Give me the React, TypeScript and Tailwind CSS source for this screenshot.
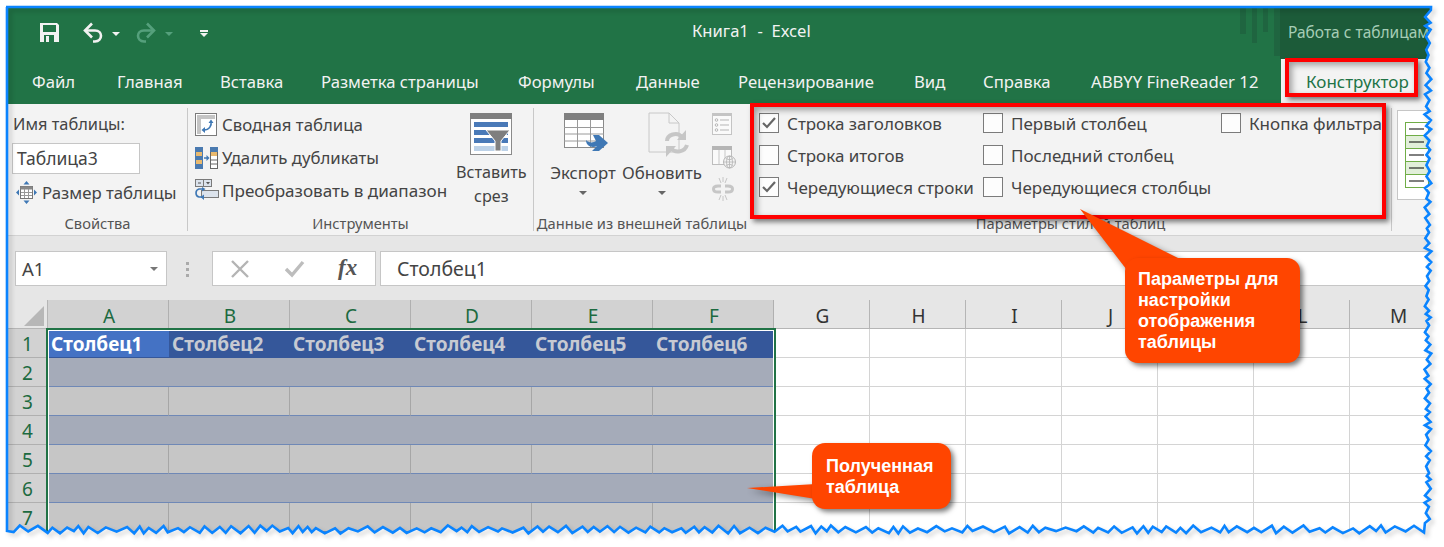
import React from "react";

const UI = "font-['Noto_Sans','Open_Sans',sans-serif]";

function rng(seed: number) {
  let s = seed;
  return () => {
    s = (s * 1103515245 + 12345) & 0x7fffffff;
    return s / 0x7fffffff;
  };
}

function tornPath() {
  const r = rng(4242);
  const pts: string[] = ["6,7", "1431,7"];
  let y = 10;
  let side = false;
  while (y < 526) {
    const x = side ? 1424.5 + r() * 2.5 : 1428.5 + r() * 3;
    pts.push(`${x.toFixed(1)},${y.toFixed(1)}`);
    y += 3 + r() * 4;
    side = !side;
  }
  let x = 1424;
  let up = false;
  while (x > 8) {
    const yy = up ? 525.5 + r() * 3 : 531 + r() * 2.5;
    pts.push(`${x.toFixed(1)},${yy.toFixed(1)}`);
    x -= 4 + r() * 7;
    up = !up;
  }
  pts.push("7,531", "7,7");
  return pts;
}

function TornEdge() {
  const pts = tornPath();
  const line = "M" + pts.join(" L") + " Z";
  return (
    <svg className="absolute left-0 top-0" width={1444} height={547} viewBox="0 0 1444 547">
      <path d={`M0 0 H1444 V547 H0 Z ${line}`} fill="#ffffff" fillRule="evenodd" />
      <path d={line} fill="none" stroke="#000" strokeOpacity={0.16} strokeWidth={3} transform="translate(3 3)" style={{ filter: "blur(2px)" }} />
      <path d={line} fill="none" stroke="#0a84ff" strokeWidth={2.6} strokeLinejoin="miter" />
    </svg>
  );
}

function Save() {
  return (
    <svg width={19} height={19} viewBox="0 0 19 19">
      <path d="M0 0H17L19 2V19H0Z" fill="#f2f2f2" />
      <rect x={3} y={2} width={13} height={7} fill="#217346" />
      <rect x={4} y={12} width={10} height={7} fill="#217346" />
      <rect x={6} y={13} width={3} height={6} fill="#f2f2f2" />
    </svg>
  );
}
function Undo({ color }: { color: string }) {
  return (
    <svg width={22} height={21} viewBox="0 0 22 21" fill="none" stroke={color} strokeWidth={2.6}>
      <path d="M10 1.5 3 8.5 10 15.5" />
      <path d="M3 8.5H13C21 8.5 21 19 13 19.5H11" />
    </svg>
  );
}
function Caret({ color = "#f2f2f2", w = 8 }: { color?: string; w?: number }) {
  return <span className="block h-0 w-0 border-x-[4px] border-t-[4px] border-x-transparent" style={{ borderTopColor: color, borderLeftWidth: w / 2, borderRightWidth: w / 2 }} />;
}

function PivotIcon() {
  return (
    <svg width={22} height={23} viewBox="0 0 22 23" className="shrink-0">
      <rect x={0.5} y={0.5} width={21} height={22} fill="#fff" stroke="#7a7a7a" />
      <rect x={2} y={2} width={18} height={4} fill="#c4c4c4" />
      <rect x={2} y={6} width={4} height={15} fill="#c4c4c4" />
      <path d="M16 8C17 13 14 17 9 17" fill="none" stroke="#3f78b5" strokeWidth={1.6} />
      <path d="M13.5 10 16 6.5 18.5 10ZM10 14 6.5 17 10 20Z" fill="#3f78b5" />
    </svg>
  );
}
function DupIcon() {
  return (
    <svg width={23} height={22} viewBox="0 0 23 22" className="shrink-0">
      <rect x={0} y={0} width={8} height={22} fill="#4a7ab0" />
      <rect x={1} y={5} width={6} height={4} fill="#e9b96e" />
      <rect x={1} y={13} width={6} height={4} fill="#e9b96e" />
      <rect x={15.5} y={0.5} width={7} height={21} fill="#fff" stroke="#666" />
      <rect x={15} y={0} width={8} height={5} fill="#4a7ab0" />
      <rect x={16} y={5} width={6} height={4} fill="#e9b96e" />
      <path d="M16 13H22M16 17H22" stroke="#666" />
      <path d="M9 11H12" stroke="#3f78b5" strokeWidth={1.5} />
      <path d="M11.5 8 14.5 11 11.5 14Z" fill="#3f78b5" />
    </svg>
  );
}
function ConvertIcon() {
  return (
    <svg width={24} height={23} viewBox="0 0 24 23" className="shrink-0">
      <rect x={0.5} y={0.5} width={16} height={7} fill="#dce3ec" stroke="#7a7a7a" />
      <path d="M8.5 0V8" stroke="#7a7a7a" />
      <path d="M3 4H6" stroke="#555" />
      <path d="M11 3H15L13 5.5Z" fill="#555" />
      <rect x={6.5} y={11.5} width={17} height={7} fill="#dce3ec" stroke="#7a7a7a" />
      <path d="M9 10H4C0 11 0 17 4 18H8" fill="none" stroke="#3f78b5" strokeWidth={1.6} />
      <path d="M7 8 10.5 10 7 12.5ZM9 15.5 5.5 18 9 21Z" fill="#3f78b5" />
    </svg>
  );
}
function SizeIcon() {
  return (
    <svg width={21} height={23} viewBox="0 0 21 23" className="shrink-0">
      <rect x={4.5} y={5.5} width={12} height={12} fill="#fff" stroke="#777" />
      <rect x={4.5} y={5.5} width={12} height={3} fill="#888" />
      <path d="M8.5 8V17M12.5 8V17M5 11.5H16M5 14.5H16" stroke="#999" />
      <path d="M10.5 0 13.5 3.5H7.5ZM10.5 23 7.5 19.5H13.5ZM0 11.5 3 8.5V14.5ZM21 11.5 18 14.5V8.5Z" fill="#3f78b5" />
    </svg>
  );
}
function SliceIcon() {
  return (
    <svg width={42} height={42} viewBox="0 0 42 42" className="shrink-0">
      <rect x={0.5} y={0.5} width={41} height={41} fill="#fff" stroke="#8a8a8a" />
      <rect x={0} y={0} width={42} height={6} fill="#7f7f7f" />
      <rect x={4} y={9} width={34} height={5} fill="#4a7ab8" />
      <rect x={4} y={17} width={34} height={5} fill="#4a7ab8" />
      <rect x={4} y={25} width={34} height={5} fill="#4a7ab8" />
      <rect x={4} y={33} width={34} height={5} fill="#bdd2e8" />
      <path d="M16 17H40L31 28V38H25V28Z" fill="#7f7f7f" stroke="#fff" />
    </svg>
  );
}
function ExportIcon() {
  return (
    <svg width={44} height={38} viewBox="0 0 44 38" className="shrink-0">
      <rect x={0.5} y={0.5} width={39} height={34} fill="#fff" stroke="#8a8a8a" />
      <rect x={0} y={0} width={40} height={7} fill="#7f7f7f" />
      <path d="M13.5 7V34M26.5 7V34M0 14.5H40M0 21H40M0 28H40" stroke="#9a9a9a" />
      <path d="M22 27 C26 31 30 29 32 28 L29 22 H35 L44 30 L35 38 H28 L33 33 C29 35 22 34 22 27Z" fill="#3f78b5" />
    </svg>
  );
}
function RefreshDocIcon() {
  return (
    <svg width={41} height={46} viewBox="0 0 41 46" className="shrink-0">
      <path d="M1 1H21L31 11V40H1Z" fill="#f3f3f3" stroke="#c8c8c8" />
      <path d="M21 1V11H31" fill="none" stroke="#c8c8c8" />
      <path d="M19 29C19 23 29 19 34 25" fill="none" stroke="#c6c6c6" strokeWidth={4} />
      <path d="M38 18V28H29Z" fill="#c6c6c6" />
      <path d="M39 33C37 40 27 42 23 36" fill="none" stroke="#c6c6c6" strokeWidth={4} />
      <path d="M18 45V34H28Z" fill="#c6c6c6" />
    </svg>
  );
}
function PropsIcon() {
  return (
    <svg width={20} height={22} viewBox="0 0 20 22" className="block">
      <rect x={0.5} y={0.5} width={19} height={21} fill="#fafafa" stroke="#c4c4c4" />
      <rect x={0} y={0} width={20} height={3} fill="#c4c4c4" />
      <path d="M8 7H17M8 12H17M8 17H17" stroke="#b5b5b5" />
      <circle cx={4.5} cy={7} r={1.3} fill="none" stroke="#b5b5b5" />
      <circle cx={4.5} cy={12} r={1.3} fill="none" stroke="#b5b5b5" />
      <circle cx={4.5} cy={17} r={1.3} fill="none" stroke="#b5b5b5" />
    </svg>
  );
}
function WebIcon() {
  return (
    <svg width={24} height={23} viewBox="0 0 24 23" className="block">
      <rect x={0.5} y={0.5} width={19} height={18} fill="#fafafa" stroke="#bdbdbd" />
      <rect x={0} y={0} width={20} height={4} fill="#b5b5b5" />
      <path d="M7 4V18M13 4V18" stroke="#c8c8c8" />
      <circle cx={17.5} cy={16} r={6} fill="#f3f3f3" stroke="#b5b5b5" />
      <path d="M11.5 16H23.5M17.5 10V22M14 12.5C16 14 19 14 21 12.5M14 19.5C16 18 19 18 21 19.5" fill="none" stroke="#b5b5b5" strokeWidth={0.8} />
      <ellipse cx={17.5} cy={16} rx={3} ry={6} fill="none" stroke="#b5b5b5" strokeWidth={0.8} />
    </svg>
  );
}
function UnlinkIcon() {
  return (
    <svg width={22} height={24} viewBox="0 0 22 24" className="block">
      <path d="M9 9H6C0 9 0 15 6 15H9M13 9H16C22 9 22 15 16 15H13" fill="none" stroke="#c6c6c6" strokeWidth={3} />
      <path d="M7 1 9 6M15 1 13 6M7 23 9 18M15 23 13 18M11 0V5M11 19V24" stroke="#c6c6c6" />
    </svg>
  );
}

function Check({ on, label }: { on?: boolean; label: string }) {
  return (
    <div className="flex h-[20px] items-center">
      <div className="flex h-[20px] w-[20px] shrink-0 items-center justify-center border border-[#7b7b7b] bg-[#fdfdfd]">
        {on && (
          <svg width={14} height={12} viewBox="0 0 14 12" fill="none" stroke="#666" strokeWidth={2.2}>
            <path d="M1 6 5 10 13 1" />
          </svg>
        )}
      </div>
      <span className="ml-[8px] mt-[1px] whitespace-nowrap text-[17px]">{label}</span>
    </div>
  );
}

function Sep() {
  return <div className="my-[4px] w-px shrink-0 bg-[#c8c8c8]" />;
}
function GroupLabel({ children }: { children: React.ReactNode }) {
  return <div className="mt-auto mb-[1px] h-[22px] whitespace-nowrap text-center text-[14.7px] leading-[22px] text-[#555]">{children}</div>;
}
function ToolRow({ icon, label }: { icon: React.ReactNode; label: string }) {
  return (
    <div className="flex h-[33px] items-center">
      <div className="flex w-[27px] shrink-0 items-center">{icon}</div>
      <span className="whitespace-nowrap">{label}</span>
    </div>
  );
}

const tabs: [string, number][] = [
  ["Файл", 85],
  ["Главная", 103],
  ["Вставка", 101],
  ["Разметка страницы", 197],
  ["Формулы", 118],
  ["Данные", 102],
  ["Рецензирование", 176],
  ["Вид", 69],
  ["Справка", 108],
  ["ABBYY FineReader 12", 190],
];

const tableCols = ["A", "B", "C", "D", "E", "F"];
const otherCols = ["G", "H", "I", "J", "K", "L", "M"];

function Sheet() {
  return (
    <div className="grid grid-cols-[40px_repeat(6,121px)_repeat(7,96px)] grid-rows-[29px_repeat(7,29px)] text-[19px] leading-none">
      <div className="flex items-end justify-end border-r border-b border-[#b5b5b5] bg-[#e6e6e6] pr-[3px] pb-[2px]">
        <span className="block h-0 w-0 border-b-[20px] border-l-[20px] border-b-[#b7b7b7] border-l-transparent" />
      </div>
      {tableCols.map((c) => (
        <div key={c} className="flex items-end justify-center border-r border-b border-[#b0b0b0] bg-[#d2d2d2] pb-[2px] pl-[2px] text-[#1c6a40]">
          {c}
        </div>
      ))}
      {otherCols.map((c) => (
        <div key={c} className="flex items-end justify-center border-r border-b border-[#b5b5b5] bg-[#e6e6e6] pb-[2px] pl-[2px] text-[#333]">
          {c}
        </div>
      ))}
      {[1, 2, 3, 4, 5, 6, 7].map((r) => (
        <React.Fragment key={r}>
          <div className="flex items-center justify-center border-r border-b border-[#b0b0b0] bg-[#d2d2d2] pt-[3px] text-[#1c6a40]">{r}</div>
          {tableCols.map((c, i) => {
            if (r === 1)
              return (
                <div key={c} className={`flex items-center border-b border-[#35579a] pl-[3px] pt-[3px] font-bold ${i === 0 ? "bg-[#4472c4] text-white" : "bg-[#35579a] text-[#c7cad2]"}`}>
                  Столбец{i + 1}
                </div>
              );
            if (r % 2 === 0) return <div key={c} className="border-b border-[#6f88b6] bg-[#a5abb9]" />;
            return <div key={c} className="border-r border-b border-r-[#a6a6a6] border-b-[#6f88b6] bg-[#c6c6c6]" />;
          })}
          {otherCols.map((c) => (
            <div key={c} className="border-r border-b border-[#d4d4d4] bg-white" />
          ))}
        </React.Fragment>
      ))}
    </div>
  );
}

export default function App() {
  return (
    <div className={`relative h-[547px] w-[1444px] overflow-hidden bg-white ${UI} text-[16.8px] text-[#444]`}>
      <div className="ml-[6px] mt-[6px] h-[541px] w-[1438px] border-t-2 border-l-2 border-[#0a84ff]">
        {/* title bar */}
        <div className="flex h-[51px] bg-[#217346] text-[#f2f2f2]">
          <div className="flex w-[1224px] items-center">
            <div className="ml-[32px] mt-[-2px]"><Save /></div>
            <div className="ml-[23px] mt-[-2px]"><Undo color="#f2f2f2" /></div>
            <div className="ml-[8px]"><Caret /></div>
            <div className="ml-[15px] mt-[-2px] -scale-x-100"><Undo color="#55a07c" /></div>
            <div className="ml-[8px]"><Caret color="#55a07c" /></div>
            <div className="ml-[27px] flex flex-col items-center gap-[1px]">
              <span className="block h-[2px] w-[8px] bg-[#f2f2f2]" />
              <Caret />
            </div>
            <div className="ml-[484px] mt-[-4px] whitespace-pre text-[16.6px]">Книга1  -  Excel</div>
          </div>
          <svg width={48} height={51} viewBox="0 0 48 51" className="shrink-0">
            <rect x={8} y={0} width={6} height={26} fill="#1f6540" />
            <rect x={20} y={0} width={5} height={35} fill="#1f6540" />
            <rect x={31} y={0} width={5} height={24} fill="#1f6540" />
            <rect x={42} y={0} width={6} height={48} fill="#1f6540" />
          </svg>
          <div className="relative flex flex-1 items-center overflow-hidden bg-[#1c5b39] pl-[8px] text-[#a6cdb6]">
            <span className="mt-[-2px] whitespace-nowrap text-[15.5px]">Работа с таблицами</span>
          </div>
        </div>
        {/* tabs */}
        <div className="flex h-[45px] bg-[#217346]">
          <div className="flex w-[1273px] items-center pl-[24px] text-[16.7px] text-[#f2f2f2]">
            {tabs.map(([t, w]) => (
              <div key={t} className="shrink-0 whitespace-nowrap" style={{ width: w }}>{t}</div>
            ))}
          </div>
          <div className="flex flex-1 items-center bg-[#f3f3f3] pl-[25px] text-[17px] text-[#217346]">Конструктор</div>
        </div>
        {/* ribbon */}
        <div className="flex h-[132px] border-b border-[#d2d2d2] bg-[#f3f3f3]">
          <div className="flex w-[179px] shrink-0 flex-col">
            <div className="ml-[5px] mt-[9px] h-[22px] text-[16.4px] leading-[22px]">Имя таблицы:</div>
            <div className="ml-[4px] mt-[8px] flex h-[31px] w-[128px] items-center border border-[#c6c6c6] bg-white pl-[4px] text-[17.5px]">Таблица3</div>
            <div className="ml-[8px] mt-[6px] flex items-center">
              <SizeIcon />
              <span className="ml-[5px] whitespace-nowrap">Размер таблицы</span>
            </div>
            <GroupLabel>Свойства</GroupLabel>
          </div>
          <Sep />
          <div className="flex w-[345px] shrink-0 flex-col">
            <div className="flex">
              <div className="ml-[7px] mt-[4px] w-[261px]">
                <ToolRow icon={<PivotIcon />} label="Сводная таблица" />
                <ToolRow icon={<DupIcon />} label="Удалить дубликаты" />
                <div className="text-[17.1px]">
                  <ToolRow icon={<ConvertIcon />} label="Преобразовать в диапазон" />
                </div>
              </div>
              <div className="flex flex-col items-center text-[16.2px]">
                <div className="mt-[9px]"><SliceIcon /></div>
                <div className="mt-[5px] leading-[24px]">Вставить</div>
                <div className="leading-[24px]">срез</div>
              </div>
            </div>
            <GroupLabel>Инструменты</GroupLabel>
          </div>
          <Sep />
          <div className="flex w-[216px] shrink-0 flex-col">
            <div className="flex">
              <div className="ml-[12px] flex w-[74px] shrink-0 flex-col items-center">
                <div className="mt-[9px] h-[46px] w-[44px] pl-[3px]"><ExportIcon /></div>
                <div className="mt-[2px] whitespace-nowrap leading-[24px]">Экспорт</div>
                <div className="mt-[6px]"><Caret color="#666" /></div>
              </div>
              <div className="flex w-[84px] shrink-0 flex-col items-center">
                <div className="mt-[8px] h-[47px] w-[41px] pl-[6px]"><RefreshDocIcon /></div>
                <div className="mt-[2px] whitespace-nowrap leading-[24px]">Обновить</div>
                <div className="mt-[6px]"><Caret color="#666" /></div>
              </div>
              <div className="ml-[8px] mt-[9px] flex flex-col items-start gap-[11px]">
                <PropsIcon />
                <WebIcon />
                <div className="-mt-[3px]"><UnlinkIcon /></div>
              </div>
            </div>
            <GroupLabel>Данные из внешней таблицы</GroupLabel>
          </div>
          <div className="flex w-[641px] shrink-0 flex-col">
            <div className="ml-[9px] mt-[9px] grid grid-cols-[224px_238px_auto] gap-y-[12px] whitespace-nowrap">
              <Check on label="Строка заголовков" />
              <Check label="Первый столбец" />
              <Check label="Кнопка фильтра" />
              <Check label="Строка итогов" />
              <Check label="Последний столбец" />
              <div />
              <Check on label="Чередующиеся строки" />
              <Check label="Чередующиеся столбцы" />
              <div />
            </div>
            <GroupLabel>Параметры стилей таблиц</GroupLabel>
          </div>
          <Sep />
          <div className="ml-[5px] mt-[6px] h-[90px] flex-1 border border-[#c6c6c6] bg-white pl-[7px] pt-[11px]">
            <svg width={24} height={68} viewBox="0 0 24 68">
              {[0, 1, 2, 3, 4].map((i) => (
                <g key={i}>
                  <rect x={0.5} y={i * 13 + 0.5} width={23} height={13} fill={i % 2 ? "#e2efda" : "#fff"} stroke="#70ad47" />
                  <path d={`M4 ${i * 13 + 7}H19`} stroke="#000" />
                </g>
              ))}
            </svg>
          </div>
        </div>
        {/* formula bar */}
        <div className="flex h-[64px] items-start bg-[#e6e6e6] pt-[15px]">
          <div className="ml-[7px] flex h-[35px] w-[152px] items-center justify-between border border-[#c6c6c6] bg-white pr-[8px] pl-[6px] text-[18.5px]">
            <span>A1</span>
            <Caret color="#777" />
          </div>
          <div className="ml-[19px] mt-[11px] flex flex-col gap-[3px]">
            <span className="h-[3px] w-[3px] bg-[#aaa]" />
            <span className="h-[3px] w-[3px] bg-[#aaa]" />
            <span className="h-[3px] w-[3px] bg-[#aaa]" />
          </div>
          <div className="ml-[23px] flex h-[35px] w-[164px] items-center border border-[#c6c6c6] bg-white">
            <svg width={18} height={18} viewBox="0 0 18 18" className="ml-[18px]" stroke="#b4b4b4" strokeWidth={2.4}>
              <path d="M1 1 17 17M17 1 1 17" />
            </svg>
            <svg width={20} height={18} viewBox="0 0 20 18" className="ml-[36px]" fill="none" stroke="#bdbdbd" strokeWidth={3.4}>
              <path d="M1 9 7 15 18 2" />
            </svg>
            <span className="ml-[33px] font-['Liberation_Serif',serif] text-[23px] font-bold italic text-[#555]">fx</span>
          </div>
          <div className="ml-[4px] flex h-[35px] flex-1 items-center border border-[#c6c6c6] bg-white pl-[16px] text-[19.5px]">Столбец1</div>
        </div>
        <Sheet />
      </div>

      {/* selection outline */}
      <div className="absolute left-[46px] top-[328px] h-[210px] w-[730px] border-2 border-[#217346]">
        <div className="h-full w-full border border-white" />
      </div>

      {/* red highlight frames */}
      <div className="absolute left-[750px] top-[103px] h-[116px] w-[636px] border-[4px] border-[#ff0000] shadow-[3px_3px_5px_rgba(0,0,0,0.5),inset_3px_3px_6px_rgba(0,0,0,0.35)]" />
      <div className="absolute left-[1285px] top-[58px] h-[39px] w-[133px] border-[4px] border-[#ff0000] shadow-[3px_3px_5px_rgba(0,0,0,0.5),inset_3px_3px_6px_rgba(0,0,0,0.35)]" />

      {/* callouts */}
      <svg className="absolute left-0 top-0 drop-shadow-[3px_3px_3px_rgba(0,0,0,0.45)]" width={1444} height={547} viewBox="0 0 1444 547">
        <path d="M1080 209 1182 260 1130 274Z" fill="#ff4500" />
        <path d="M747 488 816 484V499Z" fill="#ff4500" />
      </svg>
      <div className="absolute left-[1125px] top-[258px] h-[105px] w-[175px] rounded-[13px] bg-[#ff4500] pl-[13px] pt-[11px] font-['Liberation_Sans',sans-serif] text-[18px] font-bold leading-[21px] text-white shadow-[3px_3px_5px_rgba(0,0,0,0.5)]">
        Параметры для<br />настройки<br />отображения<br />таблицы
      </div>
      <div className="absolute left-[812px] top-[443px] h-[66px] w-[139px] rounded-[13px] bg-[#ff4500] pl-[14px] pt-[13px] font-['Liberation_Sans',sans-serif] text-[18px] font-bold leading-[21px] text-white shadow-[3px_3px_5px_rgba(0,0,0,0.5)]">
        Полученная<br />таблица
      </div>

      <TornEdge />
    </div>
  );
}
